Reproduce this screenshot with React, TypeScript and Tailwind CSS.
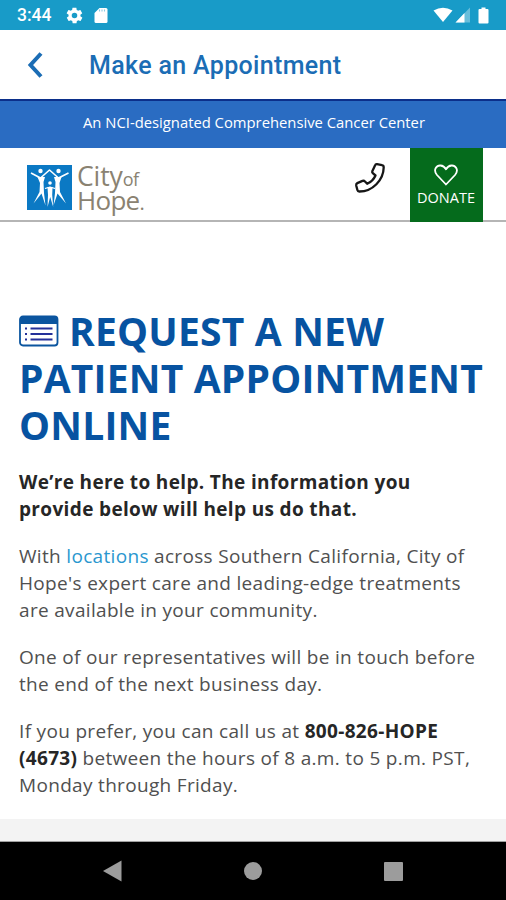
function StatusBar() {
  return (
    <div className="flex h-[30px] items-center bg-[#189bc8] pl-[17px] pr-[16px] text-white">
      <span className="w-[36px] font-['Roboto',sans-serif] text-[17.5px] leading-[30px] font-medium whitespace-nowrap">3:44</span>
      <svg className="ml-[12px] size-[19px]" viewBox="0 0 24 24" fill="currentColor">
        <path d="M19.4 13c0-.3.1-.6.1-1s0-.7-.1-1l2.1-1.6c.2-.2.3-.4.1-.7l-2-3.4c-.1-.2-.4-.3-.6-.2l-2.500 1c-.5-.4-1.100-.7-1.700-1l-.4-2.600c0-.2-.2-.4-.5-.4h-4c-.2 0-.5.2-.5.4l-.4 2.600c-.6.3-1.200.6-1.700 1l-2.500-1c-.2-.1-.5 0-.6.2l-2 3.400c-.1.2-.1.5.1.7L4.600 11c0 .3-.1.6-.1 1s0 .7.1 1l-2.100 1.600c-.2.2-.2.500-.1.700l2 3.400c.1.2.4.3.6.2l2.500-1c.5.4 1.100.700 1.700 1l.4 2.600c0 .2.2.4.500.4h4c.2 0 .500-.2.500-.4l.4-2.600c.6-.3 1.200-.6 1.700-1l2.500 1c.2.100.500 0 .6-.2l2-3.400c.100-.2.100-.500-.1-.700zM12 15.500a3.500 3.500 0 1 1 0-7 3.500 3.500 0 0 1 0 7z" />
      </svg>
      <svg className="ml-[10px] h-[17px] w-[14px]" viewBox="0 0 14 17">
        <path d="M5.500 1H12a1.500 1.500 0 0 1 1.500 1.500v12A1.500 1.500 0 0 1 12 16H2a1.500 1.500 0 0 1-1.500-1.500V6z" fill="currentColor" />
        <path d="M5.500 2.500v2M8 2.500v2M10.500 2.500v2" stroke="#8bcbe2" strokeWidth="1.100" />
      </svg>
      <div className="ml-auto flex items-center">
        <svg className="h-[16px] w-[20px]" viewBox="0 0 20 16" fill="currentColor">
          <path d="M.5 3.500Q10-2 19.500 3.500L10 15z" />
        </svg>
        <svg className="ml-[2px] h-[16px] w-[16px]" viewBox="0 0 16 16" fill="currentColor">
          <path d="M15 .5V15.500H.500z" opacity=".35" />
          <path d="M9.500 6V15.500H.500z" />
        </svg>
        <svg className="mr-px ml-[7px] h-[17px] w-[11px]" viewBox="0 0 11 17" fill="currentColor">
          <path d="M3.500.5h4V2H9.500a1 1 0 0 1 1 1v12.500a1 1 0 0 1-1 1h-8a1 1 0 0 1-1-1V3a1 1 0 0 1 1-1h2z" />
        </svg>
      </div>
    </div>
  );
}

function Logo() {
  return (
    <div className="flex pl-[27px] pt-[17px]">
      <svg className="size-[45px]" viewBox="0 0 45 45">
        <rect width="45" height="45" fill="#0b79c4" />
        <g fill="#fff">
          <circle cx="13.500" cy="6" r="2.200" />
          <circle cx="31.500" cy="6" r="2.200" />
          <circle cx="23" cy="18" r="1.800" />
        </g>
        <g fill="none" stroke="#fff" strokeLinejoin="round">
          <path d="M4 8L13.500 13L22.500 5L31.500 13L41.500 8" strokeWidth="1.600" />
          <path d="M18 23.500L23 22L28 23.500" strokeWidth="1.300" />
        </g>
        <g fill="#fff">
          <path d="M10.500 12h7.500l-1.500 5 .5 11 1.500 12.500-4-12L6.500 38.500 12.500 27l.5-9z" />
          <path d="M34.500 12H27l1.500 5-.5 11-1.500 12.500 4-12 8.500 10L33 27l-.5-9z" />
          <path d="M20.500 22h5l-.3 8 1 12-3-10-2.700 10 .5-12z" />
        </g>
      </svg>
      <div className="ml-[5px] -mt-[1px] flex flex-col font-['Open_Sans',sans-serif] text-[26.5px] text-[#8a8271]">
        <div className="flex h-[24px] items-baseline leading-[24px] whitespace-nowrap">
          <span className="tracking-[-0.1px]">City</span>
          <span className="text-[18px] tracking-[-0.5px]">of</span>
        </div>
        <div className="flex h-[24px] items-baseline text-[26px] leading-[24px] whitespace-nowrap">
          <span className="tracking-[-0.7px]">Hope</span>
          <span className="text-[20px]">.</span>
        </div>
      </div>
    </div>
  );
}

function SiteHeader() {
  return (
    <div className="flex h-[74px] border-b-2 border-[#b5b5b5] bg-white">
      <Logo />
      <svg className="mt-[14px] ml-auto h-[32px] w-[32px]" viewBox="0 0 32 32" fill="none" stroke="#161616" strokeWidth="2.300" strokeLinejoin="round">
        <path d="M21 3.500Q21.500 2 23 2.200L28 3.200Q29.700 3.500 29.700 5.500C29.500 18 18.500 29.500 5.500 29.500Q3.800 29.600 3.400 28L2.200 23.500Q1.900 21.800 3.300 21.100L8.500 18.900Q10 18.400 11 19.500L13.200 21.800Q19 19.200 21.500 13.500L18.800 11.200Q17.900 10.300 18.300 9.200Z" />
      </svg>
      <div className="mr-[23px] ml-[24px] flex h-[74px] w-[73px] flex-col items-center bg-[#056b1c] text-white">
        <svg className="mt-[16px] -ml-px h-[22px] w-[24px]" viewBox="0 0 24 22" fill="none" stroke="currentColor" strokeWidth="1.800" strokeLinejoin="round">
          <path d="M12 20.500L3 11C-1.500 5.500 3 1.200 6.500 1.500C9.500 1.700 11 3.500 12 5.300C13 3.500 14.500 1.700 17.500 1.500C21 1.200 25.500 5.500 21 11Z" />
        </svg>
        <span className="mt-px -ml-px text-[14.5px] leading-[22px] font-medium">DONATE</span>
      </div>
    </div>
  );
}

function FormIcon() {
  return (
    <svg className="mr-[10px] inline-block h-[32px] w-[40px] align-[-1px]" viewBox="0 0 40 32">
      <rect x="1" y="1.500" width="37.500" height="29" rx="3" fill="#fff" stroke="#0b559f" strokeWidth="1.800" />
      <path d="M1 9V4.500a3 3 0 0 1 3-3h31.500a3 3 0 0 1 3 3V9z" fill="#0b559f" />
      <path d="M6 13.500h2M6 19h2M6 24.500h2M11.500 13.500h22M11.500 19h22M11.500 24.500h22" stroke="#24309a" strokeWidth="2" />
    </svg>
  );
}

function AppointmentPage() {
  return (
    <main className="h-[597px] pt-[85px] pl-[19px] text-[#505050]">
      <h1 className="text-[39px] leading-[47px] font-bold tracking-[0.2px] whitespace-nowrap text-[#0753a1]">
        <FormIcon />
        REQUEST A NEW
        <br />
        PATIENT APPOINTMENT
        <br />
        ONLINE
      </h1>
      <div className="mt-[21px] flex flex-col gap-[20px] text-[19px] leading-[27px] tracking-[0.32px] whitespace-nowrap">
        <p className="font-bold tracking-[0.35px] text-[#262626]">
          We’re here to help. The information you
          <br />
          provide below will help us do that.
        </p>
        <p>
          With <a className="text-[#2a97cf]">locations</a> across Southern California, City of
          <br />
          Hope's expert care and leading-edge treatments
          <br />
          are available in your community.
        </p>
        <p>
          One of our representatives will be in touch before
          <br />
          the end of the next business day.
        </p>
        <p>
          If you prefer, you can call us at <b className="text-[#262626]">800-826-HOPE</b>
          <br />
          <b className="text-[#262626]">(4673)</b> between the hours of 8 a.m. to 5 p.m. PST,
          <br />
          Monday through Friday.
        </p>
      </div>
    </main>
  );
}

function NavBar() {
  return (
    <div className="flex h-[58px] items-center bg-black pl-[102px] text-[#9c9c9c]">
      <svg className="h-[22px] w-[20px]" viewBox="0 0 20 22" fill="currentColor">
        <path d="M1 11L19.500.5v21z" />
      </svg>
      <div className="ml-[122px] size-[18px] rounded-full bg-[#9c9c9c]" />
      <div className="ml-[122px] size-[19px] rounded-[1px] bg-[#9c9c9c]" />
    </div>
  );
}

export default function App() {
  return (
    <div className="h-[900px] w-[506px] overflow-hidden bg-white font-['Open_Sans',sans-serif]">
      <StatusBar />
      <div className="flex h-[69px] items-center bg-white text-[#1b6db5]">
        <svg className="ml-[27px] h-[28px] w-[17px]" viewBox="0 0 17 28" fill="none" stroke="currentColor" strokeWidth="4">
          <path d="M14 2.500L3.500 14L14 25.500" />
        </svg>
        <span className="mt-[2px] ml-[45px] font-['Roboto',sans-serif] text-[25px] leading-[30px] font-medium tracking-[0.34px] whitespace-nowrap">Make an Appointment</span>
      </div>
      <div className="h-[49px] border-t-2 border-[#0b2f8a] bg-[#2a6cc2] pl-[2px] text-center text-[14.8px] leading-[43px] text-white">
        <span className="whitespace-nowrap">An NCI-designated Comprehensive Cancer Center</span>
      </div>
      <SiteHeader />
      <AppointmentPage />
      <div className="h-[23px] border-b border-[#a0a0a0] bg-[#f3f3f3]" />
      <NavBar />
    </div>
  );
}
